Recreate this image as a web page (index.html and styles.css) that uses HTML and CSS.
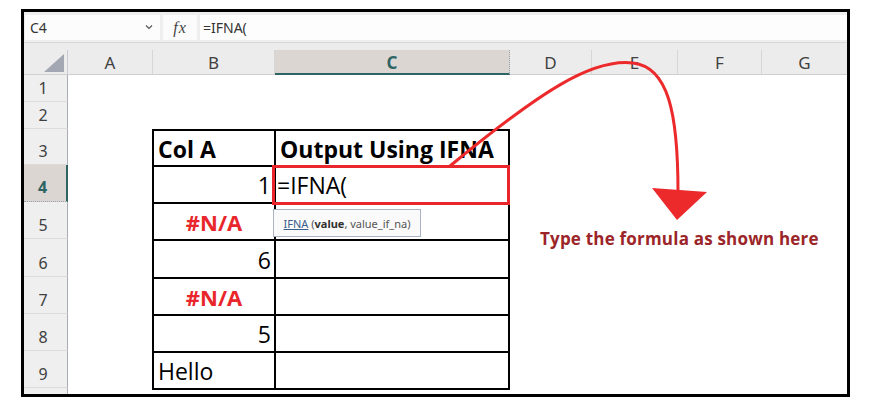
FILE: index.html
```html
<!DOCTYPE html>
<html>
<head>
<meta charset="utf-8">
<link rel="stylesheet" href="styles.css">
</head>
<body>
<div class="frame">
  <div class="fbar">
    <div class="namebox">
      <span class="ref">C4</span>
      <svg class="chev" width="8" height="6" viewBox="0 0 8 6"><path d="M1 1.5 L4 4.5 L7 1.5" fill="none" stroke="#555" stroke-width="1.2"/></svg>
    </div>
    <div class="fxbox"><span class="fx">fx</span></div>
    <div class="finput">=IFNA(</div>
  </div>
  <div class="band"></div>
  <div class="sheet">
    <div class="corner"><svg width="20" height="18" viewBox="0 0 20 18"><polygon points="0,18 20,18 20,0" fill="#a3a7b4"/></svg></div>
    <div class="colh">A</div>
    <div class="colh">B</div>
    <div class="colh sel">C</div>
    <div class="colh">D</div>
    <div class="colh">E</div>
    <div class="colh">F</div>
    <div class="colh last">G</div>

    <div class="rowh">1</div>
    <div class="rowh">2</div>
    <div class="rowh">3</div>
    <div class="rowh sel">4</div>
    <div class="rowh">5</div>
    <div class="rowh">6</div>
    <div class="rowh">7</div>
    <div class="rowh">8</div>
    <div class="rowh">9</div>
    <div class="rowh stub"></div>

    <div class="tbl">
      <div class="cell hd">Col A</div>
      <div class="cell hd">Output Using IFNA</div>
      <div class="cell num">1</div>
      <div class="cell edit">=IFNA(</div>
      <div class="cell err">#N/A</div>
      <div class="cell"></div>
      <div class="cell num">6</div>
      <div class="cell"></div>
      <div class="cell err">#N/A</div>
      <div class="cell"></div>
      <div class="cell num">5</div>
      <div class="cell"></div>
      <div class="cell txt">Hello</div>
      <div class="cell"></div>
    </div>
  </div>
</div>

<div class="hilite"></div>
<div class="tip"><span class="fn">IFNA</span> (<b>value</b>, value_if_na)</div>
<div class="note">Type the formula as shown here</div>
<svg class="arrow" width="873" height="411" viewBox="0 0 873 411">
  <path d="M450 166 C 540 92, 592 58, 633 63 C 668 67, 678 112, 678 192" fill="none" stroke="#ec2a2c" stroke-width="3"/>
  <polygon points="652,188 707,192 677,220" fill="#ec2a2c"/>
</svg>
</body>
</html>
```

FILE: styles.css
```css
* { box-sizing: border-box; }
body {
  margin: 0;
  background: #fff;
  position: relative;
  width: 873px;
  height: 411px;
  overflow: hidden;
  font-family: "Noto Sans", "Open Sans", sans-serif;
}
.frame {
  margin: 9px 0 0 21px;
  width: 829px;
  height: 388px;
  border: 3px solid #000;
  overflow: hidden;
  background: #fff;
  display: flex;
  flex-direction: column;
}
.fbar {
  height: 30px;
  background: #eeeeee;
  display: flex;
  gap: 3px;
  padding: 3px 0 2px 1px;
  flex: none;
}
.namebox {
  width: 135px;
  background: #fcfcfc;
  display: flex;
  align-items: center;
  justify-content: space-between;
  padding: 0 7px 0 5px;
  font-size: 14px;
  color: #333;
}
.chev { margin-top: -2px; }
.fxbox {
  width: 34px;
  background: #fbfbfb;
  display: flex;
  align-items: center;
  justify-content: center;
}
.fx {
  font-family: "Liberation Serif", "DejaVu Serif", serif;
  font-style: italic;
  font-size: 16px;
  color: #444;
  letter-spacing: 1px;
}
.finput {
  flex: 1;
  background: #fdfdfd;
  display: flex;
  align-items: center;
  padding-left: 3px;
  font-size: 14px;
  color: #333;
}
.band {
  height: 8px;
  flex: none;
  background: #ececec;
  border-top: 1px solid #d8d8d8;
}
.sheet {
  flex: 1;
  display: grid;
  grid-template-columns: 44px 85px 122px 235px 82px 86px 84px 85px;
  grid-template-rows: 25px 27px 27px 36px 37px 37px 38px 37px 37px 37px 20px;
}
.corner {
  background: #ececec;
  display: flex;
  align-items: flex-end;
  justify-content: flex-end;
  padding: 0 3px 2px 0;
  border-right: 1px solid #c9ccd4;
  border-bottom: 1px solid #d0d0d0;
}
.colh {
  background: #ececec;
  border-right: 1px solid #d6d6d6;
  border-bottom: 1px solid #cfcfcf;
  display: flex;
  align-items: center;
  justify-content: center;
  font-size: 17px;
  color: #404040;
  padding-top: 1px;
}
.colh.last { border-right: none; }
.colh.sel {
  background: #dcd6d3;
  border-bottom: 2px solid #2e6464;
  border-right: 1px dotted #9aa0ac;
  color: #2e6464;
  font-weight: 700;
}
.rowh {
  grid-column: 1;
  background: #efefef;
  border-right: 1px solid #a9adb8;
  border-bottom: 1px solid #dcdcdc;
  display: flex;
  align-items: flex-end;
  justify-content: center;
  padding: 0 5px 2px 0;
  font-size: 16px;
  color: #404040;
}
.rowh.sel {
  background: #dcd6d3;
  border-right: 2px solid #2e6464;
  border-bottom: 1px dotted #9aa0ac;
  color: #2e6464;
  font-weight: 700;
  padding-bottom: 3px;
}
.tbl {
  grid-column: 3 / 5;
  grid-row: 4 / 11;
  align-self: start;
  display: grid;
  grid-template-columns: 122px 1fr;
  grid-template-rows: 36px 37px 37px 38px 37px 37px 37px;
  border-top: 2px solid #000;
  border-left: 2px solid #000;
  margin-left: -1px;
  font-family: "Open Sans", "Noto Sans", sans-serif;
  color: #000;
}
.cell {
  border-right: 2px solid #000;
  border-bottom: 2px solid #000;
  display: flex;
  align-items: flex-end;
  padding: 0 3px 3px 4px;
  font-size: 23px;
  line-height: 28px;
}
.cell.hd { font-weight: 700; font-size: 23px; padding-bottom: 2px; }
.cell.num { justify-content: flex-end; }
.cell.err {
  justify-content: center;
  color: #e8262b;
  font-weight: 700;
  font-size: 22px;
  padding-left: 0;
  padding-right: 0;
}
.cell.edit { padding-left: 1px; }
.hilite {
  position: absolute;
  left: 272px;
  top: 165px;
  width: 238px;
  height: 40px;
  border: 3px solid #e8262b;
}
.tip {
  position: absolute;
  left: 273px;
  top: 209px;
  width: 148px;
  height: 28px;
  border: 1px solid #aab3c5;
  background: #fafafa;
  font-family: "Noto Sans", sans-serif;
  font-size: 11px;
  color: #555;
  display: flex;
  align-items: center;
  justify-content: center;
  white-space: pre;
}
.tip .fn { color: #3b5f8a; text-decoration: underline; }
.tip b { color: #333; }
.note {
  position: absolute;
  left: 540px;
  top: 227px;
  font-family: "Open Sans", sans-serif;
  font-weight: 700;
  font-size: 17px;
  letter-spacing: 0.2px;
  color: #9b2528;
  white-space: nowrap;
}
.arrow {
  position: absolute;
  left: 0;
  top: 0;
  pointer-events: none;
}
```
